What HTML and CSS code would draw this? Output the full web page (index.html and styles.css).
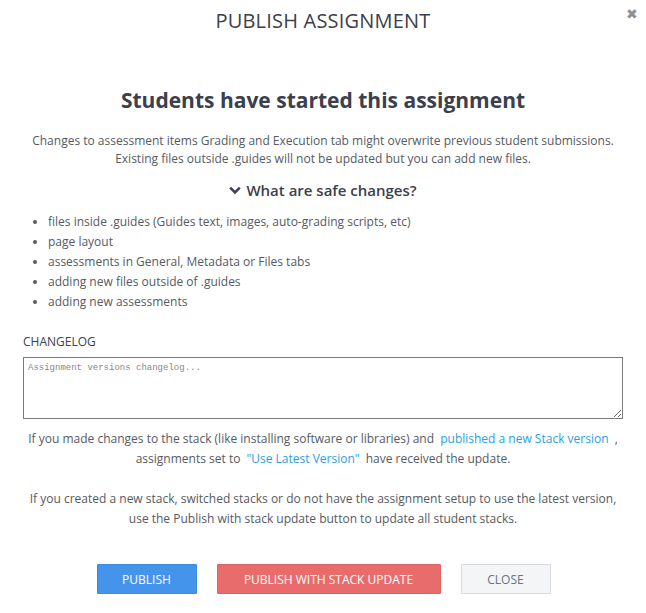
FILE: index.html
```html
<!DOCTYPE html>
<html>
<head>
<meta charset="utf-8">
<link rel="stylesheet" href="styles.css">
</head>
<body>
<div class="modal">
  <div class="modal-header">
    <h1 class="modal-title">PUBLISH ASSIGNMENT</h1>
    <span class="close-x">&#x2716;</span>
  </div>
  <div class="modal-body">
    <h2 class="headline">Students have started this assignment</h2>
    <p class="intro">Changes to assessment items Grading and Execution tab might overwrite previous student submissions.<br>Existing files outside .guides will not be updated but you can add new files.</p>
    <div class="safe-toggle">
      <svg class="chev" width="12" height="9" viewBox="0 0 12 9"><path d="M1.2 1.6 L6 6.4 L10.8 1.6" fill="none" stroke="#3d4350" stroke-width="2.6"/></svg>
      <span>What are safe changes?</span>
    </div>
    <ul class="safe-list">
      <li>files inside .guides (Guides text, images, auto-grading scripts, etc)</li>
      <li>page layout</li>
      <li>assessments in General, Metadata or Files tabs</li>
      <li>adding new files outside of .guides</li>
      <li>adding new assessments</li>
    </ul>
    <label class="field-label">CHANGELOG</label>
    <textarea class="changelog" placeholder="Assignment versions changelog..."></textarea>
    <p class="note">If you made changes to the stack (like installing software or libraries) and <a class="link">published a new Stack version</a> ,<br>assignments set to <a class="link">"Use Latest Version"</a> have received the update.</p>
    <p class="note">If you created a new stack, switched stacks or do not have the assignment setup to use the latest version,<br>use the Publish with stack update button to update all student stacks.</p>
  </div>
  <div class="modal-footer">
    <button class="btn btn-primary">PUBLISH</button>
    <button class="btn btn-danger">PUBLISH WITH STACK UPDATE</button>
    <button class="btn btn-default">CLOSE</button>
  </div>
</div>
</body>
</html>
```
FILE: styles.css
```css
* { box-sizing: border-box; }
html, body { margin: 0; padding: 0; background: #fff; }
body { font-family: "Open Sans", "Liberation Sans", sans-serif; color: #555a63; }
.modal { width: 646px; height: 613px; position: relative; }
.modal-header { height: 40px; display: flex; justify-content: center; align-items: center; padding-top: 1px; }
.modal-title { margin: 0; font-size: 20px; font-weight: 400; color: #3b404c; letter-spacing: 0.2px; }
.close-x { position: absolute; right: 8px; top: 4px; font-size: 14px; color: #8d8f94; }
.modal-body { padding: 0 23px; text-align: center; }
.headline { margin: 46px 0 0; font-size: 21px; font-weight: 700; color: #3b404c; line-height: 28px; }
.intro { margin: 18px 0 0; font-size: 12px; line-height: 18px; color: #555a63; }
.safe-toggle { margin-top: 12px; display: flex; justify-content: center; align-items: center; gap: 5px; font-size: 15px; font-weight: 600; color: #3b404c; line-height: 20px; }
.safe-list { text-align: left; margin: 12px 0 0; padding-left: 25px; font-size: 12px; line-height: 20px; color: #555a63; }
.field-label { display: block; text-align: left; margin-top: 21px; font-size: 12px; line-height: 18px; color: #3b404c; }
.changelog { display: block; width: 600px; height: 62px; margin-top: 6px; border: 1px solid #7a7a7a; border-radius: 0; padding: 5px 4px; font-family: "Liberation Mono", monospace; font-size: 9px; resize: both; }
.changelog::placeholder { color: #888; }
.note { margin: 10px 0 0; font-size: 12px; line-height: 20px; color: #555a63; }
.note + .note { margin-top: 20px; }
.link { color: #2a9fe0; padding: 0 3px; }
.modal-footer { display: flex; justify-content: center; gap: 20px; margin-top: 35px; padding-left: 1px; }
.btn { height: 30px; border: 1px solid transparent; font-family: "Open Sans", sans-serif; font-size: 12px; padding: 0; border-radius: 1px; }
.btn-primary { width: 100px; background: #4594ec; color: #fff; border-color: #3d8ae0; }
.btn-danger { width: 224px; background: #e86c6c; color: #fff; border-color: #e06262; }
.btn-default { width: 90px; background: #f4f5f7; color: #6b7280; border-color: #d8dadf; }
```
